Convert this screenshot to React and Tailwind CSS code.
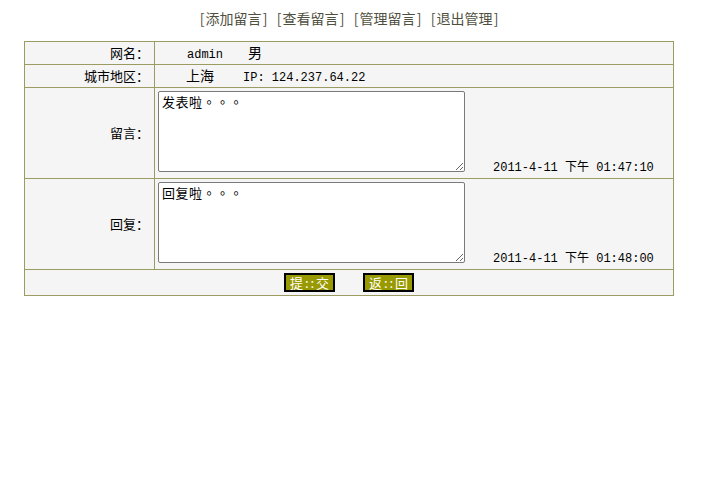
import React from "react";

const CJK = "'Noto Sans CJK SC', 'Noto Sans', sans-serif";
const CJKTC = "'Noto Sans CJK TC', 'Noto Sans CJK SC', sans-serif";
const MONO = "'Liberation Mono', 'Noto Sans CJK SC', monospace";

function NavItem({ label, last }) {
  return (
    <span className="inline-flex">
      <span className="inline-block w-[7px] text-center">[</span>
      <span>{label}</span>
      <span className="inline-block w-[7px] text-center">]</span>
      {!last && <span className="inline-block w-[7px]"></span>}
    </span>
  );
}

function MsgRow({ label, text, time }) {
  return (
    <tr className="h-[91px]">
      <td className="border border-[#9c9c62] text-right pr-[5px] text-[13px] text-black">
        {label}
      </td>
      <td className="border border-[#9c9c62] align-top pt-[3px] pl-[3px]">
        <div className="flex items-end">
          <textarea
            defaultValue={text}
            className="block w-[307px] h-[81px] border border-[#7a7a7a] rounded-[2px] bg-white px-[3px] py-[2px] text-[13px] leading-[16px] tracking-[0.5px] text-black outline-none"
            style={{ fontFamily: CJKTC }}
          />
          <span
            className="ml-[28px] mb-[-4px] text-[12px] leading-[16px] text-black whitespace-pre"
            style={{ fontFamily: MONO }}
          >
            {time}
          </span>
        </div>
      </td>
    </tr>
  );
}

export default function App() {
  return (
    <div className="w-[705px] h-[489px] bg-white" style={{ fontFamily: CJK }}>
      <div className="h-[41px] pt-[8px] pr-[7px] text-center text-[14px] leading-[20px] text-[#4f4f40]">
        <NavItem label="添加留言" />
        <NavItem label="查看留言" />
        <NavItem label="管理留言" />
        <NavItem label="退出管理" last />
      </div>
      <table className="ml-[24px] w-[650px] border-collapse bg-[#f5f5f5] border border-[#9c9c62]">
        <colgroup>
          <col className="w-[130px]" />
          <col />
        </colgroup>
        <tbody>
          <tr className="h-[23px]">
            <td className="border border-[#9c9c62] text-right pr-[5px] text-[13px] leading-[18px] text-black">
              网名：
            </td>
            <td className="border border-[#9c9c62] pl-[32px] leading-[18px] text-black">
              <span className="text-[12px]" style={{ fontFamily: MONO }}>admin</span>
              <span className="ml-[25px] text-[14px]">男</span>
            </td>
          </tr>
          <tr className="h-[23px]">
            <td className="border border-[#9c9c62] text-right pr-[5px] text-[13px] leading-[18px] text-black">
              城市地区：
            </td>
            <td className="border border-[#9c9c62] pl-[31px] leading-[18px] text-black">
              <span className="text-[14px]">上海</span>
              <span className="ml-[29px] text-[12px]" style={{ fontFamily: MONO }}>
                IP: 124.237.64.22
              </span>
            </td>
          </tr>
          <MsgRow label="留言：" text="发表啦。。。" time="2011-4-11 下午 01:47:10" />
          <MsgRow label="回复：" text="回复啦。。。" time="2011-4-11 下午 01:48:00" />
          <tr className="h-[26px]">
            <td colSpan={2} className="border border-[#9c9c62] text-center leading-[16px]">
              <div className="flex justify-center gap-[28px]">
                <button className="w-[51px] h-[19px] bg-[#999900] border-2 border-black text-white text-[13px] leading-[15px] tracking-[2px] pl-[2px]">
                  提::交
                </button>
                <button className="w-[51px] h-[19px] bg-[#999900] border-2 border-black text-white text-[13px] leading-[15px] tracking-[2px] pl-[2px]">
                  返::回
                </button>
              </div>
            </td>
          </tr>
        </tbody>
      </table>
    </div>
  );
}
